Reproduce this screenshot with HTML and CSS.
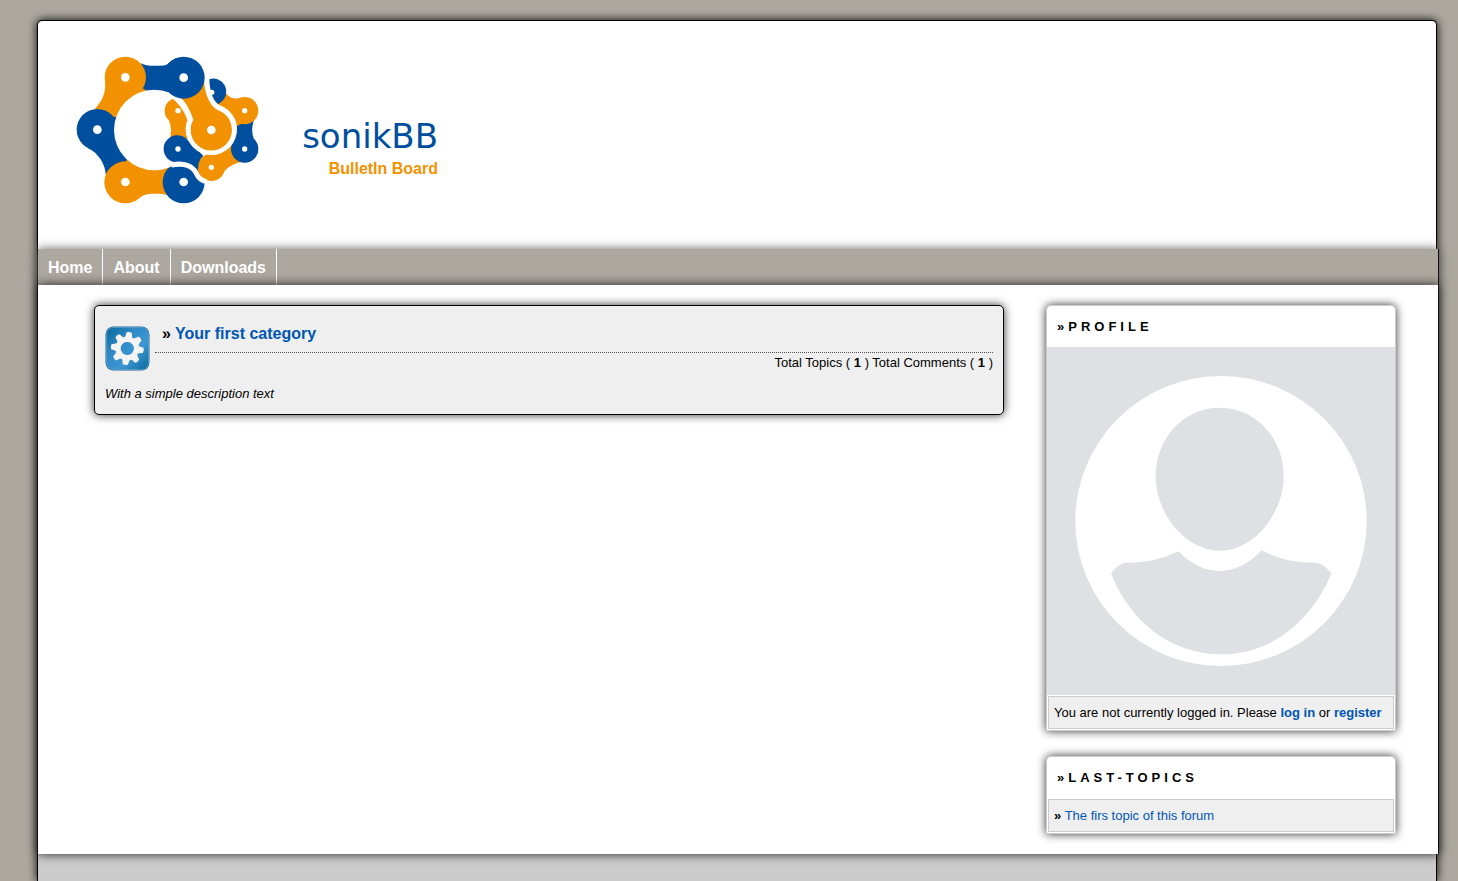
FILE: index.html
```html
<!DOCTYPE html>
<html lang="en">
<head>
    <meta charset="utf-8">
    <title>sonikBB</title>
    <link rel="stylesheet" href="styles.css">
</head>
<body>
    <div class="wrapper">
        <header class="header">
            <svg class="logo" viewBox="0 0 660 540" aria-hidden="true">
                <!-- big chain -->
                <path class="blue" d="M244 70C258 80 285 77 312 77C332 71 335 60 352 53L371 112V200H244Z"/>
                <path class="orange" d="M135 125C140 160 122 188 104 207L165 260L260 152L196 112Z"/>
                <path class="blue" d="M84 325C115 338 136 375 137 402L220 380L190 234L112 225Z"/>
                <path class="orange" d="M226 482C248 464 258 461 283 461C300 461 312 462 326 466L336 372L203 350L180 427Z"/>
                <circle class="orange" cx="196" cy="112" r="62"/>
                <circle class="blue" cx="112" cy="269" r="62"/>
                <circle class="orange" cx="196" cy="427" r="63"/>
                <circle class="blue" cx="371" cy="427" r="63"/>
                <circle class="hole" cx="283" cy="270" r="121"/>
                <!-- small chain -->
                <path class="orange" d="M326 240C334 258 335 275 330 297H392V200H340Z"/>
                <path class="orange" d="M483 412C494 385 513 374 542 366L516 306L440 345Z"/>
                <path class="blue" d="M581 243C575 260 575 278 581 296L554 327L518 300L526 240Z"/>
                <path class="orange" d="M494 155C508 174 524 179 545 173L560 245L530 258L470 192Z"/>
                <circle class="orange" cx="353" cy="212" r="39"/>
                <circle class="orange" cx="454" cy="382" r="41"/>
                <circle class="blue" cx="554" cy="327" r="41"/>
                <circle class="orange" cx="554" cy="212" r="41"/>
                <path class="blue" d="M447 118A39 39 0 0 1 482 187L472 195L446 166Z"/>
                <path class="blue" d="M381 298A41 41 0 1 0 340 366C372 362 396 370 415 386C414 370 420 356 430 347Z"/>
                <path class="gap" d="M334 375C375 369 395 376 408 398C414 412 424 422 440 425"/>
                <!-- front link -->
                <path class="edge" d="M330 162C362 180 378 204 391 240A69 69 0 1 0 477 203C457 194 440 165 440 112L371 112Z"/>
                <path class="blue" d="M312 77C332 71 335 60 352 53L371 112V178C345 160 320 148 283 148H270L290 78Z"/>
                <path class="orange" d="M362 173C382 191 390 212 400 239A62 62 0 1 0 474 211C450 198 436 166 432 125L371 112Z"/>
                <circle class="blue" cx="371" cy="113" r="63"/>
                <g class="hole">
                    <circle cx="196" cy="112" r="13"/>
                    <circle cx="371" cy="113" r="13"/>
                    <circle cx="112" cy="269" r="13"/>
                    <circle cx="196" cy="426" r="13"/>
                    <circle cx="371" cy="426" r="13"/>
                    <circle cx="454" cy="270" r="13"/>
                    <circle cx="354" cy="212" r="8"/>
                    <circle cx="354" cy="327" r="8"/>
                    <circle cx="454" cy="382" r="8"/>
                    <circle cx="554" cy="327" r="8"/>
                    <circle cx="554" cy="212" r="8"/>
                    <circle cx="455" cy="157" r="8"/>
                </g>
            </svg>
            <div class="brand">
                <h1>sonikBB</h1>
                <p>BulletIn Board</p>
            </div>
        </header>
        <nav class="menu">
            <a href="#">Home</a>
            <a href="#">About</a>
            <a href="#">Downloads</a>
        </nav>
        <main class="main">
            <section class="content">
                <article class="category">
                    <div class="category-top">
                        <svg class="icon" viewBox="0 0 45 45" aria-hidden="true">
                            <defs>
                                <linearGradient id="tile" x1="0" y1="0" x2="1" y2="1">
                                    <stop offset="0" stop-color="#08689a"/>
                                    <stop offset=".35" stop-color="#3089c6"/>
                                    <stop offset=".65" stop-color="#3c97d3"/>
                                    <stop offset="1" stop-color="#08689a"/>
                                </linearGradient>
                                <path id="tooth" d="M-4.8 -10Q-2.8 -12 -2.6 -16Q0 -17.4 2.6 -16Q2.8 -12 4.8 -10Z"/>
                            </defs>
                            <rect x=".5" y=".5" width="44" height="44" rx="8" fill="#23669c"/>
                            <rect x="1.5" y="1.5" width="42" height="42" rx="7" fill="url(#tile)" stroke="#5c9fca" stroke-width=".8"/>
                            <g fill="#f4f4f4" transform="translate(22.3 22.5) rotate(7)">
                                <path fill-rule="evenodd" d="M0 -11.4A11.4 11.4 0 1 1 0 11.4A11.4 11.4 0 1 1 0 -11.4ZM0 -6.6A6.6 6.6 0 1 0 0 6.6A6.6 6.6 0 1 0 0 -6.6Z"/>
                                <use href="#tooth"/>
                                <use href="#tooth" transform="rotate(45)"/>
                                <use href="#tooth" transform="rotate(90)"/>
                                <use href="#tooth" transform="rotate(135)"/>
                                <use href="#tooth" transform="rotate(180)"/>
                                <use href="#tooth" transform="rotate(225)"/>
                                <use href="#tooth" transform="rotate(270)"/>
                                <use href="#tooth" transform="rotate(315)"/>
                            </g>
                        </svg>
                        <div class="category-info">
                            <h2>» <a href="#">Your first category</a></h2>
                            <p class="totals">Total Topics ( <b>1</b> ) Total Comments ( <b>1</b> )</p>
                        </div>
                    </div>
                    <p class="description">With a simple description text</p>
                </article>
            </section>
            <aside class="sidebar">
                <section class="box">
                    <h3>»PROFILE</h3>
                    <svg class="avatar" viewBox="0 0 1044 1044" role="img" aria-label="No avatar">
                        <rect width="1044" height="1044" fill="#dfe0e4"/>
                        <ellipse cx="522" cy="522" rx="437" ry="435" fill="#fff"/>
                        <g fill="#dfe0e4">
                            <path d="M518 182C625 182 710 272 710 388C710 498 622 611 518 611C414 611 326 498 326 388C326 272 411 182 518 182Z"/>
                            <path d="M394 613C435 653 474 672 518 672C563 672 604 652 644 610C695 636 741 647 803 647C824 648 840 661 853 680C790 830 665 922 522 922C375 922 250 828 192 679C205 662 220 648 242 647C300 647 344 637 394 613Z"/>
                        </g>
                    </svg>
                    <p class="item">You are not currently logged in. Please <a href="#"><b>log in</b></a> or <a href="#"><b>register</b></a></p>
                </section>
                <section class="box">
                    <h3>»LAST-TOPICS</h3>
                    <p class="item"><b>»</b> <a href="#">The firs topic of this forum</a></p>
                </section>
            </aside>
        </main>
    </div>
</body>
</html>
```
FILE: styles.css
```css
* {
    box-sizing: border-box;
}

body {
    margin: 0;
    min-height: 100vh;
    display: flex;
    flex-direction: column;
    overflow-x: hidden;
    font-family: "Liberation Sans", Arial, sans-serif;
    font-size: 13px;
    color: #000;
    background-color: #aca79f;
}

h1, h2, h3, p {
    margin: 0;
}

a {
    color: #0056b3;
    text-decoration: none;
}

.wrapper {
    flex: 1;
    margin: 20px 21px 0 37px;
    border: 1px solid #000;
    border-bottom: none;
    border-radius: 5px 5px 0 0;
    background-color: #ccc;
    box-shadow: 0 0 10px #000;
}

.header {
    display: flex;
    padding: 19px 22px 29px;
    background-color: #fff;
    border-radius: 5px 5px 0 0;
}

.logo {
    width: 220px;
    height: 180px;
}

.logo .orange {
    fill: #f39200;
}

.logo .blue {
    fill: #004f9f;
}

.logo .hole,
.logo .edge {
    fill: #fff;
}

.logo .edge {
    stroke: #fff;
    stroke-width: 16;
}

.logo .gap {
    fill: none;
    stroke: #fff;
    stroke-width: 15;
}

.brand {
    padding-top: 76px;
    text-align: right;
}

.brand h1 {
    font-family: "DejaVu Sans", sans-serif;
    font-size: 34px;
    font-weight: normal;
    line-height: 40px;
    width: 158px;
    color: #004f9f;
}

.brand p {
    font-size: 16px;
    font-weight: bold;
    line-height: 26px;
    color: #f39200;
}

.menu,
.main {
    position: relative;
    display: flex;
    margin-right: -3px;
    border-right: 1px solid #111;
}

.menu {
    background-color: #aca79f;
    box-shadow: 0 0 10px #666;
}

.menu a {
    padding: 1px 10px 0;
    border-right: 1px solid #fff;
    font-size: 16px;
    font-weight: bold;
    line-height: 35px;
    color: #fff;
}

.main {
    gap: 42px;
    padding: 20px 42px 20px 56px;
    background-color: #fff;
    box-shadow: 0 0 10px #222;
}

.content {
    flex: 1;
}

.sidebar {
    width: 350px;
    display: flex;
    flex-direction: column;
    gap: 25px;
}

.category {
    padding: 20px 10px 10px;
    border: 1px solid #000;
    border-radius: 5px;
    background-color: #efefef;
    box-shadow: 0 0 10px #333;
}

.category-top {
    display: flex;
    gap: 5px;
}

.icon {
    width: 45px;
    height: 45px;
}

.category-info {
    flex: 1;
}

.category h2 {
    padding: 0 7px 10px;
    border-bottom: 1px dotted #555;
    font-size: 16px;
    line-height: 16px;
}

.totals {
    line-height: 20px;
    text-align: right;
}

.description {
    padding-top: 11px;
    font-style: italic;
    line-height: 20px;
}

.box {
    border: 1px solid #ccc;
    border-radius: 5px 5px 0 0;
    background-color: #fff;
    box-shadow: 0 0 10px #333;
}

.box h3 {
    padding-left: 10px;
    font-size: 13px;
    line-height: 41px;
    letter-spacing: 4px;
}

.avatar {
    display: block;
    width: 100%;
}

.item {
    margin: 1px;
    padding: 0 5px;
    border: 1px solid #ccc;
    background-color: #efefef;
    line-height: 31px;
}
```
